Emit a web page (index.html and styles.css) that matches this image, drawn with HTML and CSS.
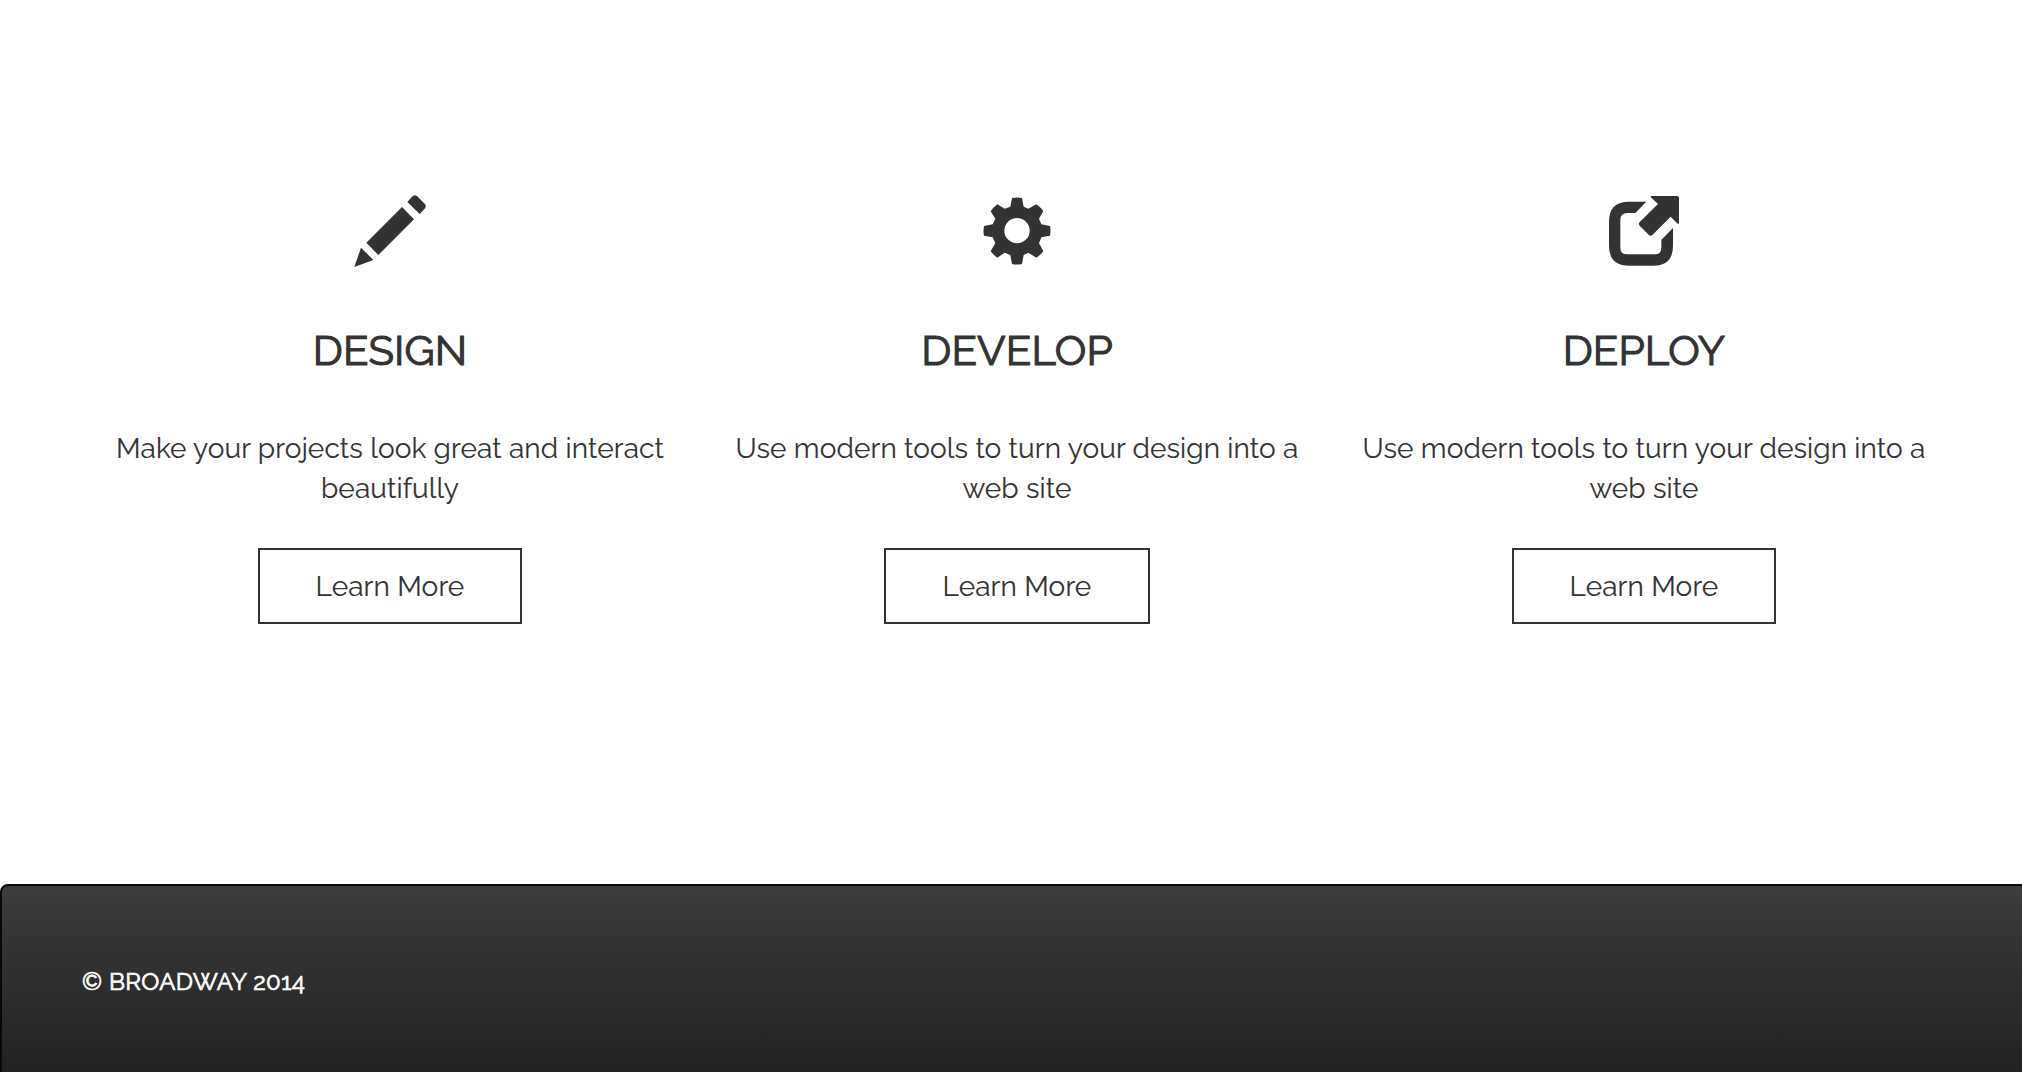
FILE: index.html
```html
<!DOCTYPE html>
<html lang="en">
<head>
<meta charset="utf-8">
<title>Broadway</title>
<link rel="stylesheet" href="styles.css">
</head>
<body>
<main class="features">
<section class="feature">
<svg class="icon" viewBox="0 0 300 300"><path d="M43 261L63 203L100 240Z M79 188L186 81L222 118L115 225Z M202 66L216 50Q223 42 231 48L254 71Q261 78 254 86L239 102Z"/></svg>
<h2 class="title">DESIGN</h2>
<p class="text">Make your projects look great and interact<br>beautifully</p>
<a class="button">Learn More</a>
</section>
<section class="feature">
<svg class="icon" viewBox="6 0 300 300"><path fill-rule="evenodd" d="M141 54Q156 51 171 54L176 80L190 86L214 73Q227 82 235 94L222 116L229 133L255 138Q258 153 255 167L229 172L222 190L235 213Q227 225 214 233L190 218L176 225L171 252Q156 255 141 252L136 225L119 218L97 233Q85 225 77 213L91 190L83 172L57 167Q54 153 57 138L83 133L91 116L77 94Q85 82 97 73L119 86L136 80Z M156 114A38 38 0 1 0 156 190A38 38 0 1 0 156 114Z"/></svg>
<h2 class="title">DEVELOP</h2>
<p class="text">Use modern tools to turn your design into a<br>web site</p>
<a class="button button-wide">Learn More</a>
</section>
<section class="feature">
<svg class="icon" viewBox="-3 0 300 300"><path d="M154 65H102Q42 65 42 125V198Q42 257 102 257H175Q234 257 234 198V144L199 179V203Q199 223 179 223H97Q76 223 76 203V119Q76 99 97 99H121Z M168 48H246Q252 48 252 54V128Q251 134 246 130L227 110L173 164Q167 170 161 164L134 137Q129 131 135 125L189 72L170 54Q165 49 168 48Z"/></svg>
<h2 class="title">DEPLOY</h2>
<p class="text">Use modern tools to turn your design into a<br>web site</p>
<a class="button">Learn More</a>
</section>
</main>
<footer class="footer">© BROADWAY 2014</footer>
</body>
</html>
```
FILE: styles.css
```css
* { box-sizing: border-box; }
body { margin: 0; height: 1072px; overflow: hidden; background: #fff; color: #333; font-family: Raleway, Lato, "Open Sans", sans-serif; display: flex; flex-direction: column; }
.features { height: 884px; padding: 180px 64px 0 76px; display: grid; grid-template-columns: repeat(3, 627px); align-content: start; flex: none; }
.feature { display: flex; flex-direction: column; align-items: center; text-align: center; }
.icon { width: 100px; height: 100px; fill: #333; }
.title { margin: 44px 0 0; padding-left: 1px; font-size: 42px; line-height: 54px; font-weight: 400; letter-spacing: 0.1px; -webkit-text-stroke: 1.1px #333; }
.text { margin: 51px 0 0; padding-left: 1px; font-size: 28px; line-height: 40px; letter-spacing: 0.1px; white-space: nowrap; -webkit-text-stroke: 0.1px #333; }
.button { margin-top: 39px; width: 264px; height: 76px; border: 2px solid #333; font-size: 28px; letter-spacing: 0.1px; padding: 1px 0 0 1px; display: flex; align-items: center; justify-content: center; -webkit-text-stroke: 0.1px #333; }
.button-wide { width: 266px; }
.footer { flex: none; width: 2040px; height: 200px; padding: 82px 0 0 80px; border: 2px solid #080808; border-radius: 8px; background: linear-gradient(#3c3c3c, #222 186px); color: #fff; font-size: 24px; line-height: 28px; letter-spacing: 0.4px; font-variant-numeric: oldstyle-nums; -webkit-text-stroke: 0.7px #fff; }
```
